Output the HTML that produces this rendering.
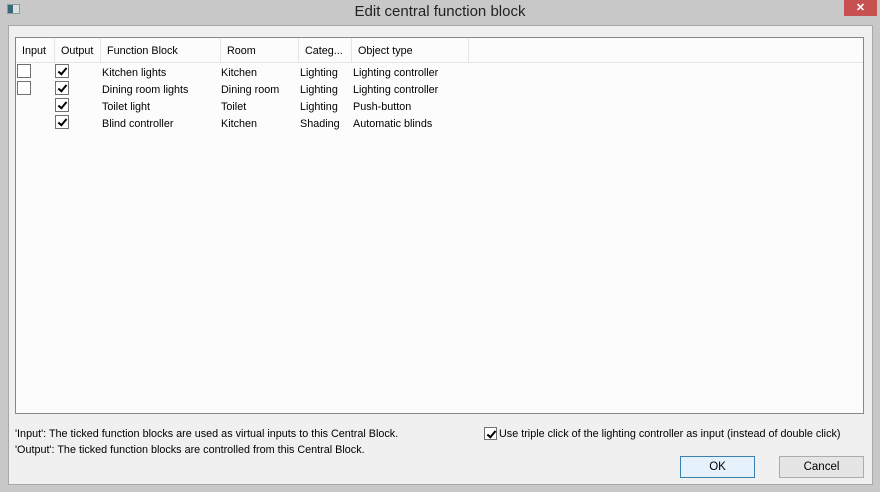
<!DOCTYPE html>
<html><head><style>
*{margin:0;padding:0;box-sizing:border-box}
body{width:880px;height:492px;background:#c8c8c8;font-family:"Liberation Sans",sans-serif;font-size:10.8px;color:#000;position:relative;overflow:hidden}
.abs{position:absolute;white-space:nowrap}
.client{position:absolute;left:8px;top:25px;width:865px;height:460px;background:#f0f0f0;border:1px solid #a8a8a8}
.list{position:absolute;left:15px;top:37px;width:849px;height:377px;background:#fcfcfc;border:1px solid #828790}
.hd{position:absolute;top:0;height:25px;border-right:1px solid #e5e5e5;line-height:26px;padding-left:6px}
.cb{position:absolute;width:14px;height:14px;border:1px solid #707070;background:#fff}
.cb.k::after{content:"";position:absolute;left:4px;top:1px;width:3px;height:7px;border:solid #000;border-width:0 2px 2px 0;transform:rotate(40deg)}
.btn{position:absolute;height:22px;background:#e5e5e5;border:1px solid #acacac;text-align:center;line-height:20px;font-size:11.5px}
</style></head><body>
<div class="abs" style="left:7px;top:4px;width:13px;height:10px;background:#d8e0e0;border:1px solid #8a9aa0"><div style="width:5px;height:8px;background:#3a6a7a"></div></div>
<div class="abs" style="left:0;width:880px;top:3px;text-align:center;font-size:15px;color:#222">Edit central function block</div>
<div class="abs" style="left:844px;top:0;width:33px;height:16px;background:#c75050;color:#fff;text-align:center;font-size:11px;line-height:16px;font-weight:bold">✕</div>
<div class="client"></div>
<div class="list">
<div style="position:absolute;left:0;top:0;width:847px;height:25px;border-bottom:1px solid #e5e5e5"></div>
<div class="hd" style="left:0;width:39px">Input</div>
<div class="hd" style="left:39px;width:46px">Output</div>
<div class="hd" style="left:85px;width:120px">Function Block</div>
<div class="hd" style="left:205px;width:78px">Room</div>
<div class="hd" style="left:283px;width:53px">Categ...</div>
<div class="hd" style="left:336px;width:117px">Object type</div>
</div>
<div class="cb" style="left:17px;top:64px"></div>
<div class="cb" style="left:17px;top:81px"></div>
<div class="cb k" style="left:55px;top:64px"></div>
<div class="cb k" style="left:55px;top:81px"></div>
<div class="cb k" style="left:55px;top:98px"></div>
<div class="cb k" style="left:55px;top:115px"></div>
<div class="abs" style="left:102px;top:65px;line-height:17px">Kitchen lights<br>Dining room lights<br>Toilet light<br>Blind controller</div>
<div class="abs" style="left:221px;top:65px;line-height:17px">Kitchen<br>Dining room<br>Toilet<br>Kitchen</div>
<div class="abs" style="left:300px;top:65px;line-height:17px">Lighting<br>Lighting<br>Lighting<br>Shading</div>
<div class="abs" style="left:353px;top:65px;line-height:17px">Lighting controller<br>Lighting controller<br>Push-button<br>Automatic blinds</div>
<div class="abs" style="left:15px;top:426px;line-height:16px">'Input': The ticked function blocks are used as virtual inputs to this Central Block.<br>'Output': The ticked function blocks are controlled from this Central Block.</div>
<div class="cb k" style="left:484px;top:427px;width:13px;height:13px"></div>
<div class="abs" style="left:499px;top:427px;line-height:14px">Use triple click of the lighting controller as input (instead of double click)</div>
<div class="btn" style="left:680px;top:456px;width:75px;border-color:#3c7fb1;background:#e5f1fb">OK</div>
<div class="btn" style="left:779px;top:456px;width:85px">Cancel</div>
</body></html>
